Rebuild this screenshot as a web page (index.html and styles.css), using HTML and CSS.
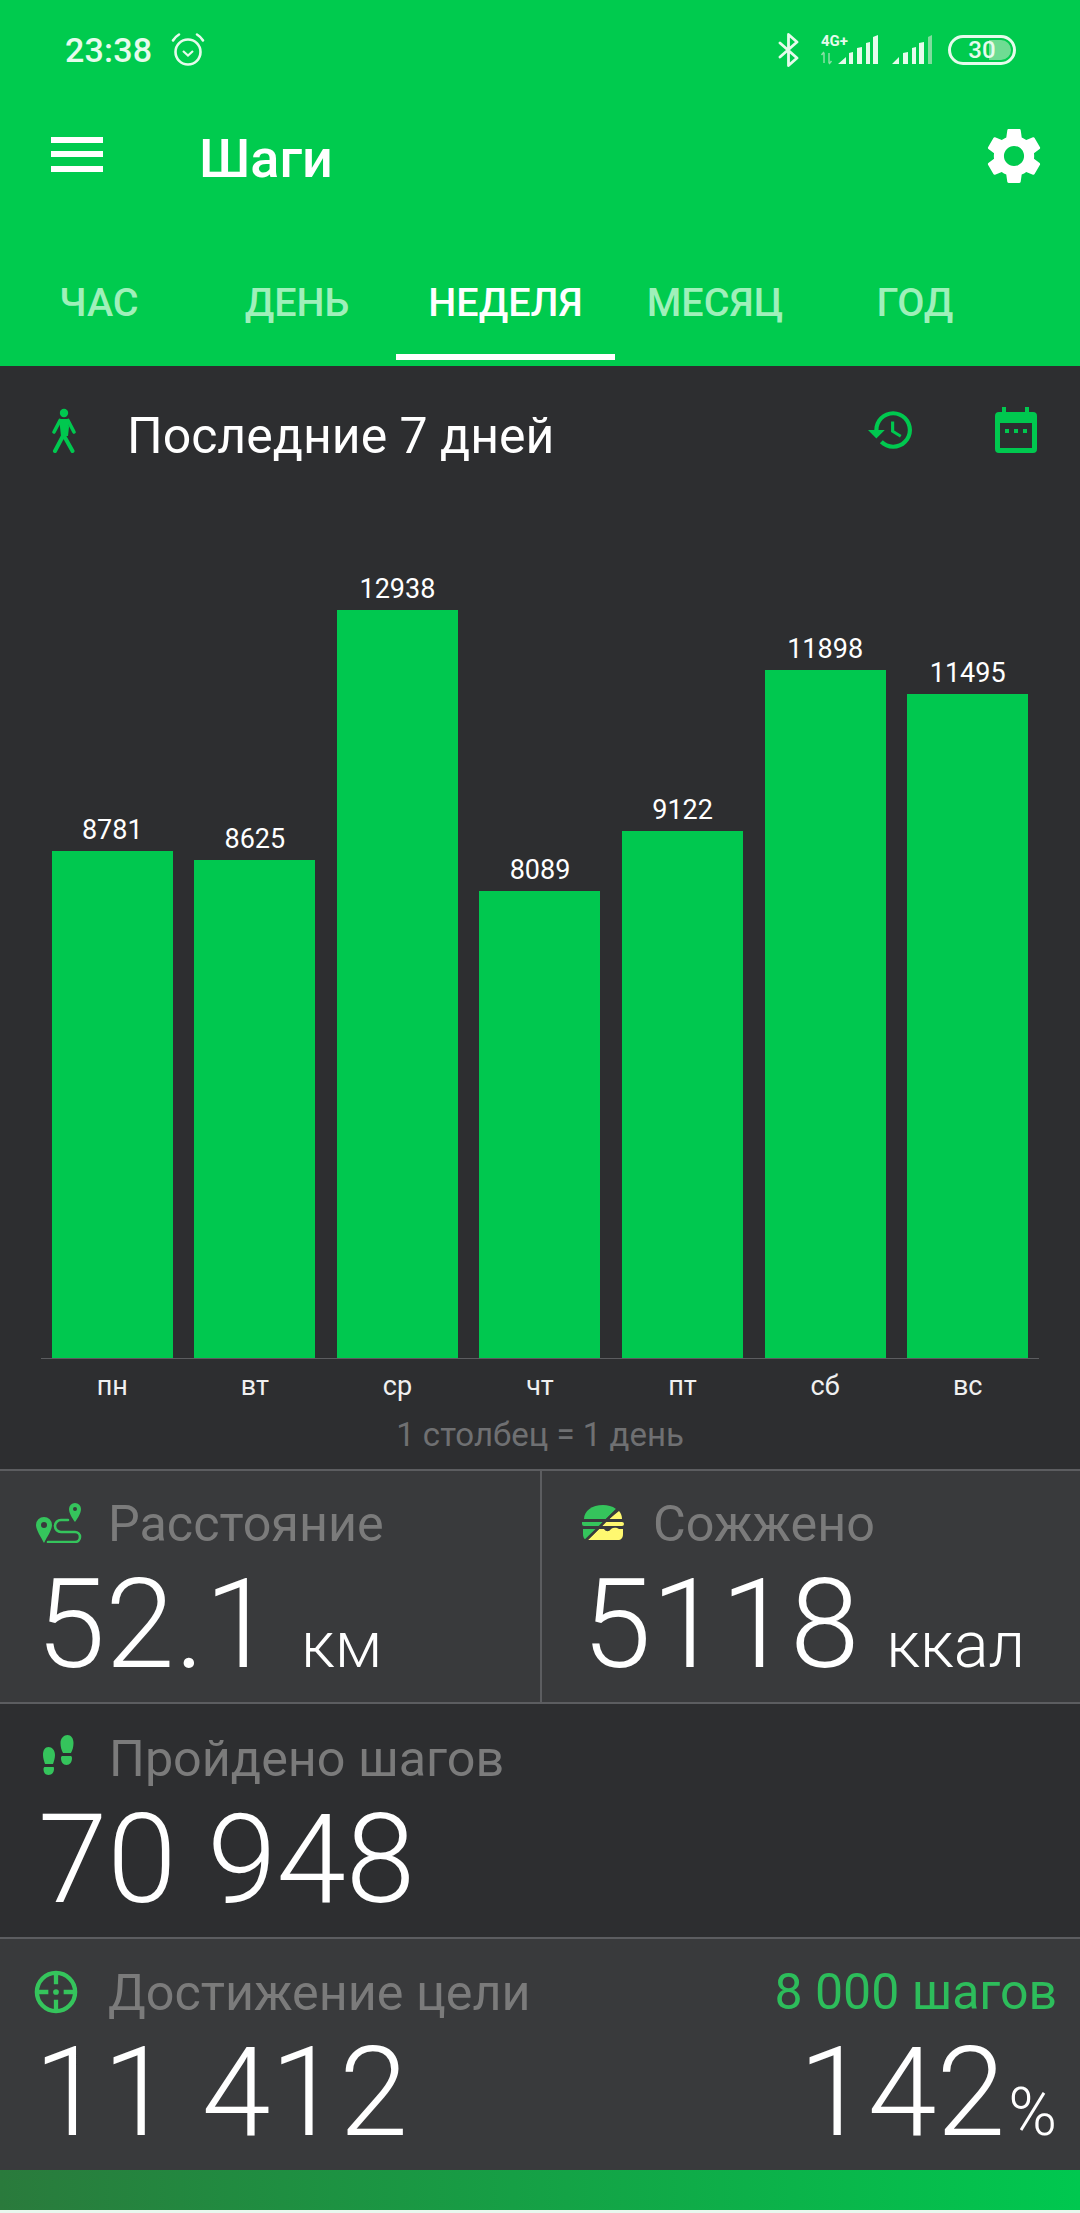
FILE: index.html
```html
<!DOCTYPE html>
<html lang="ru">
<head>
    <meta charset="UTF-8">
    <meta name="viewport" content="width=device-width, initial-scale=1.0">
    <title>Шаги</title>
    <link rel="stylesheet" href="styles.css">
</head>
<body>
<div class="app">
    <header class="top">
        <div class="status">
            <span class="clock">23:38</span>
            <svg class="alarm" viewBox="0 0 36 36" width="36" height="36" fill="none" stroke="#e6fbec" stroke-width="2.6">
                <circle cx="18" cy="20" r="12.5"/>
                <path d="M13 19l5 4.5 5-4.5" stroke-width="2.2"/>
                <path d="M3 8.5C4.5 6 6.5 4 9 2.5M33 8.5C31.5 6 29.5 4 27 2.5" stroke-linecap="round"/>
            </svg>
            <span class="status-gap"></span>
            <svg class="bt" viewBox="0 0 22 34" width="22" height="34" fill="none" stroke="#e6fbec" stroke-width="2.8" stroke-linejoin="round" stroke-linecap="round">
                <path d="M2 10l17 15-8.5 7.5V1.5L19 9 2 24"/>
            </svg>
            <svg class="net" viewBox="0 0 57 30" width="57" height="30">
                <text x="0" y="11" class="net-label">4G+</text>
                <path d="M3 18v10M0.5 20l2.500-3M8 18v10M10.500 26l-2.500 3" stroke="#8be0a6" stroke-width="1.5" fill="none"/>
                <path d="M17 29l8-7v7zM28 29V18l4-1v12zM36 29V13l5-1v17zM45 29V8l4-1v22zM52 29V2l5-2v29z" fill="#e6fbec"/>
            </svg>
            <svg class="sig" viewBox="0 0 40 30" width="40" height="30">
                <path d="M0 29l7-7v7zM11 29V18l5-1v12zM20 29V13l4-1v17zM27 29V8l5-1v22z" fill="#e6fbec"/>
                <path d="M36 29V2l4-2v29z" fill="#7fdd9d"/>
            </svg>
            <div class="batt">
                <span class="batt-fill"></span>
                <span class="batt-num">30</span>
            </div>
        </div>
        <div class="toolbar">
            <div class="burger"><i></i><i></i><i></i></div>
            <h1 class="title">Шаги</h1>
            <svg class="gear" viewBox="2 2 20 20" width="56" height="56" fill="#fff">
                <path d="M19.14 12.94c.04-.3.06-.61.06-.94 0-.32-.02-.64-.07-.94l2.03-1.58c.18-.14.23-.41.12-.61l-1.92-3.32c-.12-.22-.37-.29-.59-.22l-2.39.96c-.5-.38-1.03-.7-1.62-.94l-.36-2.54c-.04-.24-.24-.41-.48-.41h-3.84c-.24 0-.43.17-.47.41l-.36 2.54c-.59.24-1.13.57-1.62.94l-2.39-.96c-.22-.08-.47 0-.59.22L2.74 8.87c-.12.21-.08.47.12.61l2.03 1.58c-.05.3-.09.63-.09.94s.02.64.07.94l-2.03 1.58c-.18.14-.23.41-.12.61l1.92 3.32c.12.22.37.29.59.22l2.39-.96c.5.38 1.03.7 1.62.94l.36 2.54c.05.24.24.41.48.41h3.84c.24 0 .44-.17.47-.41l.36-2.54c.59-.24 1.13-.56 1.62-.94l2.39.96c.22.08.47 0 .59-.22l1.92-3.32c.12-.22.07-.47-.12-.61l-2.01-1.58zM12 15.6c-1.98 0-3.6-1.62-3.6-3.6s1.62-3.6 3.6-3.6 3.6 1.62 3.6 3.6-1.62 3.6-3.6 3.6z"/>
            </svg>
        </div>
        <nav class="tabs">
            <a class="tab">ЧАС</a>
            <a class="tab">ДЕНЬ</a>
            <a class="tab active">НЕДЕЛЯ</a>
            <a class="tab">МЕСЯЦ</a>
            <a class="tab">ГОД</a>
        </nav>
    </header>

    <section class="period">
        <svg class="walker" viewBox="0 0 26 45" width="26" height="45" fill="#00c84f" stroke="#00c84f" stroke-linecap="round">
            <circle cx="13" cy="5" r="4.2" stroke="none"/>
            <path d="M8 11h9l1 8-1 9h-7l-1-9z" stroke="none"/>
            <path d="M9 12.5L3 24M17 12.5L23 24" stroke-width="3.6" fill="none"/>
            <path d="M13 26L4 43M12 26l9.500 17" stroke-width="4" fill="none"/>
        </svg>
        <span class="period-text">Последние 7 дней</span>
        <svg class="history" viewBox="1 3 21 18" width="44" height="38" fill="#00c84f">
            <path d="M13 3c-4.97 0-9 4.03-9 9H1l3.89 3.89.07.14L9 12H6c0-3.87 3.13-7 7-7s7 3.13 7 7-3.13 7-7 7c-1.93 0-3.68-.79-4.94-2.06l-1.42 1.42C8.27 19.99 10.51 21 13 21c4.97 0 9-4.03 9-9s-4.03-9-9-9zm-1 5v5l4.28 2.54.72-1.21-3.5-2.08V8H12z"/>
        </svg>
        <svg class="calendar" viewBox="0 0 42 46" width="42" height="46" fill="#00c84f">
            <path d="M7 0h4v5h19V0h4v5h4a4 4 0 0 1 4 4v33a4 4 0 0 1-4 4H4a4 4 0 0 1-4-4V9a4 4 0 0 1 4-4h3zM5 16v25h32V16z" fill-rule="evenodd"/>
            <path d="M10 22h4v4h-4zM19 22h4v4h-4zM28 22h4v4h-4z"/>
        </svg>
    </section>

    <section class="chart">
        <div class="bars">
            <div class="col"><span class="val">8781</span><div class="bar" style="height:507px"></div></div>
            <div class="col"><span class="val">8625</span><div class="bar" style="height:498px"></div></div>
            <div class="col"><span class="val">12938</span><div class="bar" style="height:748px"></div></div>
            <div class="col"><span class="val">8089</span><div class="bar" style="height:467px"></div></div>
            <div class="col"><span class="val">9122</span><div class="bar" style="height:527px"></div></div>
            <div class="col"><span class="val">11898</span><div class="bar" style="height:688px"></div></div>
            <div class="col"><span class="val">11495</span><div class="bar" style="height:664px"></div></div>
        </div>
        <div class="days">
            <span>пн</span><span>вт</span><span>ср</span><span>чт</span><span>пт</span><span>сб</span><span>вс</span>
        </div>
        <p class="note">1 столбец = 1 день</p>
    </section>

    <section class="row row-split light">
        <div class="cell cell-left">
            <div class="head">
                <svg class="ico" viewBox="0 0 46 40" width="46" height="40" fill="#35c45c">
                    <path d="M8 14a8 8 0 0 1 8 8c0 5-5 12-8 18-3-6-8-13-8-18a8 8 0 0 1 8-8zm0 5a3 3 0 1 0 0 6 3 3 0 0 0 0-6z" fill-rule="evenodd"/>
                    <path d="M39 0a6 6 0 0 1 6 6c0 4-3 9-6 13-3-4-6-9-6-13a6 6 0 0 1 6-6zm0 4a2 2 0 1 0 0 4 2 2 0 0 0 0-4z" fill-rule="evenodd"/>
                    <path d="M32 17H25a6 6 0 0 0 0 12h14a5 5 0 0 1 0 10H12" fill="none" stroke="#35c45c" stroke-width="2.6" stroke-linecap="round"/>
                </svg>
                <span class="label">Расстояние</span>
            </div>
            <div class="nums"><span class="big">52.1</span><span class="unit">км</span></div>
        </div>
        <div class="cell cell-right">
            <div class="head">
                <svg class="ico" viewBox="0 0 42 36" width="42" height="36">
                    <path d="M2 14C2 6 10 0 21 0c5 0 9 1 13 4L24 14z" fill="#35c45c"/>
                    <path d="M0 17h21l-3 4H2a2 2 0 0 1-2-2zM1 24h14L4 35c-2-1-3-3-3-6z" fill="#35c45c"/>
                    <path d="M37 6c2 2 3 5 3 8H27zM23 17h17a2 2 0 0 1 2 2 2 2 0 0 1-2 2H20z" fill="#fff870"/>
                    <path d="M17 24h5c2 3 5 3 7 0 3-2 6-1 8 0h4v5c0 4-2 6-5 6H6z" fill="#fff870"/>
                    <path d="M38 2L3 36" stroke="#393a3c" stroke-width="2.5"/>
                </svg>
                <span class="label">Сожжено</span>
            </div>
            <div class="nums"><span class="big">5118</span><span class="unit">ккал</span></div>
        </div>
    </section>

    <section class="row dark">
        <div class="cell cell-steps">
            <div class="head">
                <svg class="ico" viewBox="0 0 32 46" width="32" height="46" fill="#35c45c">
                    <path d="M6.5 12C3 12 1 15 1 20c0 3 1 6 2 9h8c1-3 2-6 2-9 0-5-3-8-6.5-8zM2.5 32h9c.5 0 .5 1 .5 2 0 3-2 6-5.500 6S1.500 37 1.500 34c0-1 .5-2 1-2z"/>
                    <path d="M25.5 0c3.500 0 6 3 6 8 0 4-1 7-2.500 10h-8c-1.500-3-2.500-6-2.500-10 0-5 3.500-8 7-8zM20 21h9c.5 0 1 1 1 2 0 4-2 7-5.500 7S19 27 19 23c0-1 .5-2 1-2z"/>
                </svg>
                <span class="label">Пройдено шагов</span>
            </div>
            <div class="nums"><span class="big">70 948</span></div>
        </div>
    </section>

    <section class="row light">
        <div class="cell cell-goal">
            <div class="head">
                <svg class="ico" viewBox="0 0 46 46" width="44" height="44" fill="none" stroke="#35c45c" stroke-width="4.5">
                    <circle cx="23" cy="23" r="20"/>
                    <path d="M23 3v12M23 31v12M3 23h12M31 23h12"/>
                    <circle cx="23" cy="23" r="3" fill="#35c45c" stroke="none"/>
                </svg>
                <span class="label">Достижение цели</span>
                <span class="target">8 000 шагов</span>
            </div>
            <div class="nums">
                <span class="big">11 412</span>
                <span class="pct"><span class="big">142</span><span class="pct-sign">%</span></span>
            </div>
        </div>
    </section>

    <div class="progress"></div>
    <div class="edge"></div>
</div>
</body>
</html>
```

FILE: styles.css
```css
/* Page */
html, body {
    margin: 0;
    padding: 0;
    background-color: #2d2e30;
}

.app {
    width: 1080px;
    height: 2213px;
    overflow: hidden;
    font-family: Roboto, "Noto Sans", sans-serif;
    color: #fff;
    background-color: #2d2e30;
}

/* Green header */
.top {
    height: 366px;
    background-color: #00cb4e;
}

.status {
    height: 100px;
    display: flex;
    align-items: center;
    padding: 0 64px 0 65px;
    box-sizing: border-box;
    color: #e6fbec;
}

.clock {
    font-size: 34px;
    font-weight: 500;
    letter-spacing: 0.2px;
}

.alarm {
    margin-left: 18px;
}

.status-gap {
    flex: 1;
}

.net {
    margin-left: 21px;
    overflow: visible;
}

.net-label {
    font-family: Roboto, sans-serif;
    font-size: 15px;
    font-weight: 700;
    fill: #e6fbec;
}

.sig {
    margin-left: 14px;
}

.batt {
    position: relative;
    width: 68px;
    height: 30px;
    margin-left: 16px;
    border: 3px solid #e6fbec;
    border-radius: 15px;
    box-sizing: border-box;
    display: flex;
    align-items: center;
    justify-content: center;
    font-size: 24px;
    font-weight: 500;
    color: #e6fbec;
}

.batt-fill {
    position: absolute;
    left: 0;
    top: 0;
    bottom: 0;
    right: 0;
    border-radius: 12px;
    margin: 2px;
    background: linear-gradient(90deg, transparent 62%, #6fdc93 62%);
}

.batt-num {
    position: relative;
}

.toolbar {
    height: 116px;
    display: flex;
    align-items: center;
    padding: 0 38px 0 51px;
}

.burger {
    width: 52px;
    height: 35px;
    display: flex;
    flex-direction: column;
    justify-content: space-between;
    margin-top: -8px;
}

.burger i {
    display: block;
    height: 6px;
    background-color: #fff;
}

.title {
    flex: 1;
    margin: 0 0 0 96px;
    font-size: 54px;
    font-weight: 500;
}

.gear {
    margin-top: -4px;
}

.tabs {
    height: 150px;
    display: grid;
    grid-template-columns: 198px 198px 219px 200px 200px;
}

.tab {
    height: 144px;
    box-sizing: border-box;
    display: flex;
    align-items: center;
    justify-content: center;
    padding-top: 34px;
    border-bottom: 6px solid transparent;
    font-size: 39.5px;
    font-weight: 500;
    color: #9ff0ba;
}

.tab.active {
    color: #fff;
    border-bottom-color: #fff;
}

/* Period row */
.period {
    height: 128px;
    display: flex;
    align-items: center;
    padding: 0 43px 0 51px;
}

.period-text {
    flex: 1;
    margin: 12px 0 0 50px;
    font-size: 50px;
}

.calendar {
    margin-left: 83px;
}

/* Chart */
.chart {
    padding: 0 41px 15px;
}

.bars {
    height: 865px;
    display: grid;
    grid-template-columns: repeat(7, 1fr);
    border-bottom: 1px solid #5c5d60;
    box-sizing: border-box;
}

.col {
    display: flex;
    flex-direction: column;
    align-items: center;
    justify-content: flex-end;
}

.val {
    font-size: 27px;
    line-height: 32px;
    margin-bottom: 5px;
}

.bar {
    width: 121px;
    background-color: #00c84f;
}

.days {
    display: grid;
    grid-template-columns: repeat(7, 1fr);
    text-align: center;
    font-size: 27px;
    line-height: 32px;
    padding-top: 11px;
    color: #f0f0f0;
}

.note {
    margin: 14px 0 0;
    text-align: center;
    font-size: 33px;
    line-height: 38px;
    color: #6f7072;
}

/* Stat rows */
.row {
    box-sizing: border-box;
    border-top: 2px solid #5c5d60;
}

.light {
    background-color: #393a3c;
}

.dark {
    background-color: #2d2e30;
}

.row-split {
    display: flex;
    height: 233px;
}

.row-split + .dark {
    height: 235px;
}

.dark + .light {
    height: 233px;
}

.cell {
    box-sizing: border-box;
}

.cell-left {
    width: 540px;
    padding: 22px 0 0 36px;
}

.cell-right {
    flex: 1;
    padding: 22px 0 0 40px;
    border-left: 2px solid #5c5d60;
}

.cell-steps {
    padding: 24px 0 0 42px;
}

.cell-goal {
    padding: 23px 23px 0 34px;
}

.head {
    display: flex;
    align-items: center;
    height: 60px;
}

.label {
    margin-left: 26px;
    font-size: 50.3px;
    color: #7b7b7b;
}

.cell-right .label {
    margin-left: 29px;
}

.cell-steps .label {
    margin-left: 35px;
}

.cell-goal .label {
    margin-left: 30px;
}

.target {
    margin-left: auto;
    font-size: 50px;
    color: #2dbd5b;
}

.nums {
    display: flex;
    align-items: baseline;
    margin-top: 16px;
}

.cell-steps .nums {
    margin-left: -4px;
}

.cell-goal .nums {
    margin: 15px 0 0;
}

.big {
    font-size: 125px;
    font-weight: 300;
    line-height: 112px;
}

.cell-goal .big {
    font-size: 124px;
}

.unit {
    margin-left: 27px;
    font-size: 65px;
    font-weight: 300;
}

.pct {
    margin-left: auto;
}

.pct-sign {
    margin-left: 3px;
    font-size: 66px;
    font-weight: 300;
}

.progress {
    height: 40px;
    background: linear-gradient(90deg, #2a7a3c, #00c84f);
}

.edge {
    height: 3px;
    background-color: #e8f8ee;
}
```
